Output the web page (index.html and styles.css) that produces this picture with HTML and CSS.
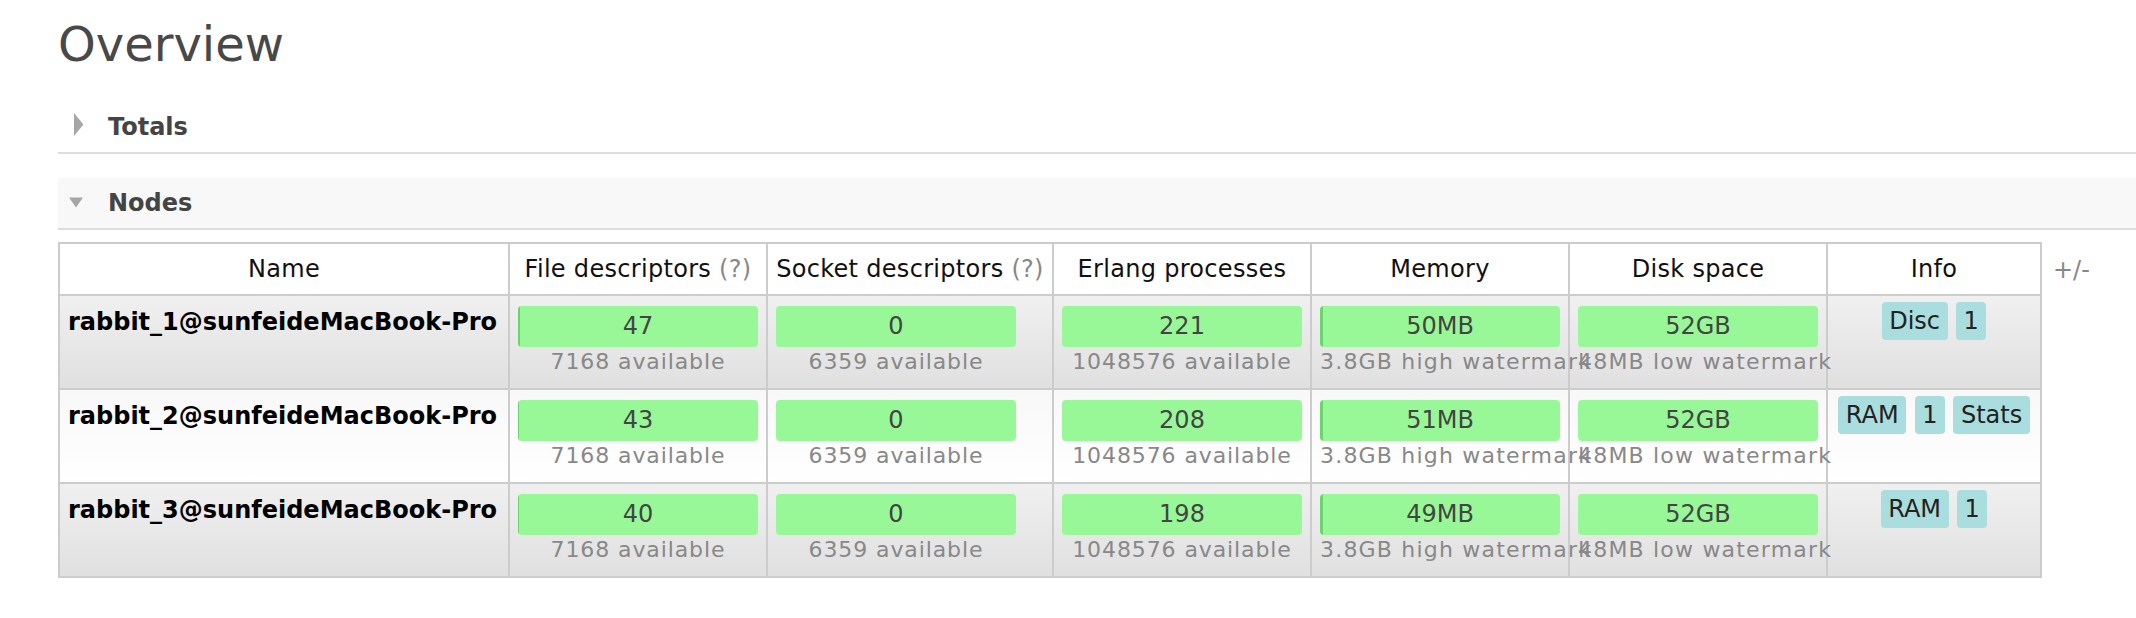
FILE: index.html
```html
<!DOCTYPE html>
<html lang="en">
<head>
<meta charset="utf-8">
<title>Overview</title>
<link rel="stylesheet" href="styles.css">
</head>
<body>
<main class="page">
  <h1 class="title">Overview</h1>

  <section class="section section--closed">
    <h2 class="section-head">
      <span class="toggle"><svg width="14" height="50" viewBox="0 0 14 50"><polygon points="5,11 14.5,22.5 5,34" fill="#a6a6a6"/></svg></span>
      Totals
    </h2>
  </section>

  <section class="section section--open">
    <h2 class="section-head">
      <span class="toggle"><svg width="14" height="50" viewBox="0 0 14 50"><polygon points="0,19.5 14,19.5 7,29.5" fill="#a6a6a6"/></svg></span>
      Nodes
    </h2>

    <div class="nodes">
      <table class="list">
        <colgroup>
          <col class="c-name"><col class="c-fd"><col class="c-sock"><col class="c-erl"><col class="c-mem"><col class="c-disk"><col class="c-info">
        </colgroup>
        <thead>
          <tr>
            <th>Name</th>
            <th>File descriptors <span class="help">(?)</span></th>
            <th>Socket descriptors <span class="help">(?)</span></th>
            <th>Erlang processes</th>
            <th>Memory</th>
            <th>Disk space</th>
            <th>Info</th>
          </tr>
        </thead>
        <tbody>
          <tr class="alt1">
            <td class="name">rabbit_1@sunfeideMacBook-Pro</td>
            <td><div class="status"><div class="bar" style="--used: 1.6px">47</div><span class="sub">7168 available</span></div></td>
            <td><div class="status"><div class="bar" style="--used: 0px">0</div><span class="sub">6359 available</span></div></td>
            <td><div class="status"><div class="bar" style="--used: 0px">221</div><span class="sub">1048576 available</span></div></td>
            <td><div class="status"><div class="bar" style="--used: 3px">50MB</div><span class="sub sub--wide">3.8GB high watermark</span></div></td>
            <td><div class="status"><div class="bar" style="--used: 0px">52GB</div><span class="sub sub--wide">48MB low watermark</span></div></td>
            <td class="info"><div class="badges"><span class="badge">Disc</span><span class="badge">1</span></div></td>
          </tr>
          <tr class="alt2">
            <td class="name">rabbit_2@sunfeideMacBook-Pro</td>
            <td><div class="status"><div class="bar" style="--used: 1.5px">43</div><span class="sub">7168 available</span></div></td>
            <td><div class="status"><div class="bar" style="--used: 0px">0</div><span class="sub">6359 available</span></div></td>
            <td><div class="status"><div class="bar" style="--used: 0px">208</div><span class="sub">1048576 available</span></div></td>
            <td><div class="status"><div class="bar" style="--used: 3px">51MB</div><span class="sub sub--wide">3.8GB high watermark</span></div></td>
            <td><div class="status"><div class="bar" style="--used: 0px">52GB</div><span class="sub sub--wide">48MB low watermark</span></div></td>
            <td class="info"><div class="badges"><span class="badge">RAM</span><span class="badge">1</span><span class="badge">Stats</span></div></td>
          </tr>
          <tr class="alt1">
            <td class="name">rabbit_3@sunfeideMacBook-Pro</td>
            <td><div class="status"><div class="bar" style="--used: 1.4px">40</div><span class="sub">7168 available</span></div></td>
            <td><div class="status"><div class="bar" style="--used: 0px">0</div><span class="sub">6359 available</span></div></td>
            <td><div class="status"><div class="bar" style="--used: 0px">198</div><span class="sub">1048576 available</span></div></td>
            <td><div class="status"><div class="bar" style="--used: 3px">49MB</div><span class="sub sub--wide">3.8GB high watermark</span></div></td>
            <td><div class="status"><div class="bar" style="--used: 0px">52GB</div><span class="sub sub--wide">48MB low watermark</span></div></td>
            <td class="info"><div class="badges"><span class="badge">RAM</span><span class="badge">1</span></div></td>
          </tr>
        </tbody>
      </table>
      <span class="col-options">+/-</span>
    </div>
  </section>
</main>
</body>
</html>
```

FILE: styles.css
```css
* {
  box-sizing: border-box;
}

body {
  margin: 0;
  background: #fff;
  color: #222;
  font-family: "DejaVu Sans", Verdana, sans-serif;
  font-size: 24px;
}

.page {
  padding-left: 58px;
}

.title {
  margin: 16px 0 0;
  font-size: 48px;
  line-height: 56px;
  font-weight: normal;
  color: #484848;
}

.section--closed {
  margin-top: 30px;
}

.section--open {
  margin-top: 24px;
}

.section-head {
  display: flex;
  align-items: center;
  height: 52px;
  margin: 0;
  padding-left: 11px;
  font-size: 24px;
  line-height: 50px;
  font-weight: bold;
  color: #444;
  border-bottom: 2px solid #ddd;
}

.section--open .section-head {
  background: #f8f8f8;
}

.toggle {
  display: flex;
  width: 14px;
  height: 50px;
  margin-right: 25px;
}

.nodes {
  display: flex;
  align-items: flex-start;
  gap: 11px;
  margin-top: 12px;
}

.list {
  width: 1984px;
  table-layout: fixed;
  border-collapse: separate;
  border-spacing: 0;
  border-top: 2px solid #ccc;
  border-left: 2px solid #ccc;
}

.c-name { width: 450px; }
.c-fd { width: 258px; }
.c-sock { width: 286px; }
.c-erl { width: 258px; }
.c-mem { width: 258px; }
.c-disk { width: 258px; }
.c-info { width: 214px; }

.list th,
.list td {
  border-right: 2px solid #ccc;
  border-bottom: 2px solid #ccc;
}

.list th {
  padding: 11px 6px;
  font-weight: normal;
  line-height: 28px;
  letter-spacing: 0.3px;
  text-align: center;
  color: #111;
  background: #fff;
  white-space: nowrap;
}

.help {
  color: #888;
}

.list td {
  padding: 10px 8px 11px;
  vertical-align: top;
}

.alt1 td {
  background: linear-gradient(to bottom, #f0f0f0 0%, #e0e0e0 100%);
}

.alt2 td {
  background: linear-gradient(to bottom, #f8f8f8 0%, #ffffff 100%);
}

.list td.name {
  padding: 12px 8px;
  line-height: 28px;
  font-weight: bold;
  color: #000;
  white-space: nowrap;
}

.status {
  width: 240px;
  text-align: center;
}

.bar {
  height: 41px;
  line-height: 41px;
  border-radius: 4px;
  color: #444;
  background: linear-gradient(to right, #6dd46d var(--used), #98f898 var(--used));
}

.sub {
  display: block;
  font-size: 22px;
  line-height: 30px;
  letter-spacing: 0.9px;
  color: #888;
  white-space: nowrap;
}

.sub--wide {
  letter-spacing: 1.2px;
}

.list td.info {
  padding: 6px 0 0;
}

.badges {
  display: flex;
  justify-content: center;
  gap: 8.5px;
}

.badge {
  height: 38px;
  padding: 0 7.5px;
  line-height: 38px;
  border-radius: 4px;
  background: #aadddd;
  color: #222;
}

.col-options {
  margin-top: 14px;
  line-height: 28px;
  color: #888;
}
```
